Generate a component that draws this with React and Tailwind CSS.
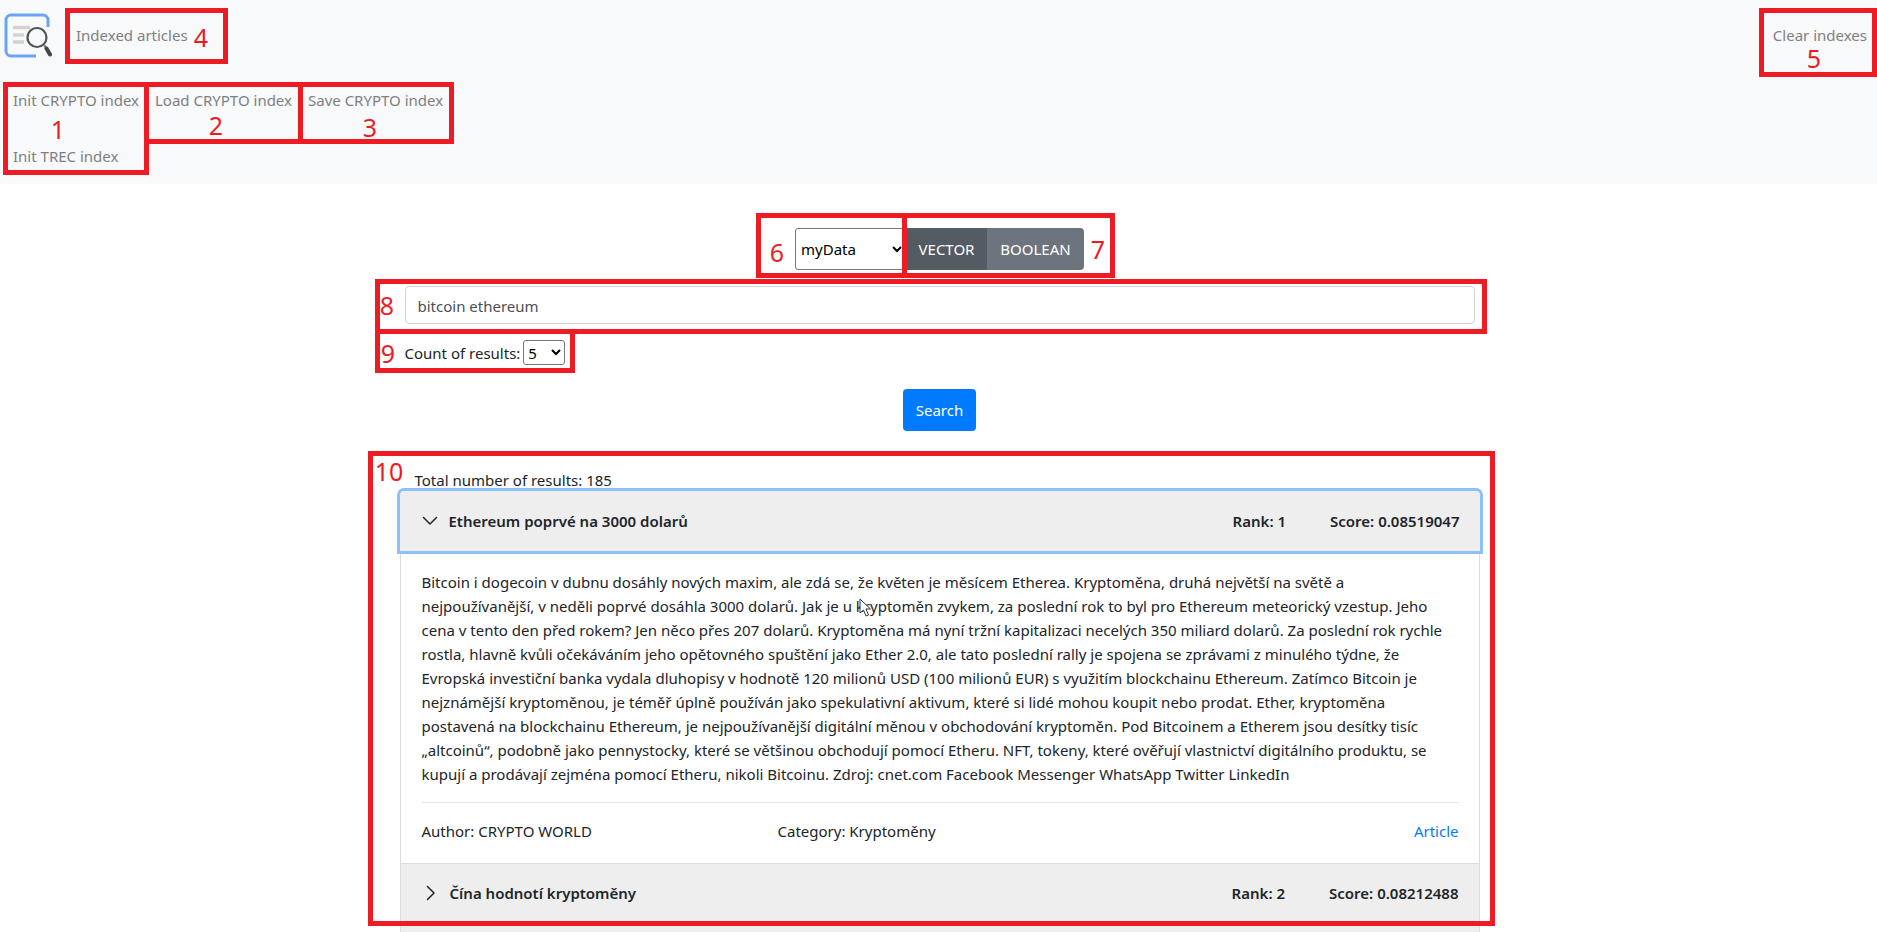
const lines = [
  "Bitcoin i dogecoin v dubnu dosáhly nových maxim, ale zdá se, že květen je měsícem Etherea. Kryptoměna, druhá největší na světě a",
  "nejpoužívanější, v neděli poprvé dosáhla 3000 dolarů. Jak je u kryptoměn zvykem, za poslední rok to byl pro Ethereum meteorický vzestup. Jeho",
  "cena v tento den před rokem? Jen něco přes 207 dolarů. Kryptoměna má nyní tržní kapitalizaci necelých 350 miliard dolarů. Za poslední rok rychle",
  "rostla, hlavně kvůli očekáváním jeho opětovného spuštění jako Ether 2.0, ale tato poslední rally je spojena se zprávami z minulého týdne, že",
  "Evropská investiční banka vydala dluhopisy v hodnotě 120 milionů USD (100 milionů EUR) s využitím blockchainu Ethereum. Zatímco Bitcoin je",
  "nejznámější kryptoměnou, je téměř úplně používán jako spekulativní aktivum, které si lidé mohou koupit nebo prodat. Ether, kryptoměna",
  "postavená na blockchainu Ethereum, je nejpoužívanější digitální měnou v obchodování kryptoměn. Pod Bitcoinem a Etherem jsou desítky tisíc",
  "„altcoinů“, podobně jako pennystocky, které se většinou obchodují pomocí Etheru. NFT, tokeny, které ověřují vlastnictví digitálního produktu, se",
  "kupují a prodávají zejména pomocí Etheru, nikoli Bitcoinu. Zdroj: cnet.com Facebook Messenger WhatsApp Twitter LinkedIn",
];

const boxes = [
  [65, 8, 163, 56], [3, 82, 146, 93], [144, 82, 159, 62], [298, 82, 156, 62], [1759, 8, 118, 69],
  [756, 213, 151, 65], [902, 213, 213, 65], [375, 279, 1112, 55], [375, 329, 200, 44], [368, 451, 1127, 475],
];
const digits = [
  ["1", 58, 129], ["2", 216, 125], ["3", 370, 127], ["4", 201, 37], ["5", 1814, 58],
  ["6", 777, 252], ["7", 1098, 249], ["8", 387, 305], ["9", 388, 353], ["10", 389, 471],
];

function Logo() {
  return (
    <svg width="48" height="47" viewBox="0 0 48 47" fill="none">
      <path d="M44 15V8a5 5 0 0 0-5-5H7a5 5 0 0 0-5 5v31a5 5 0 0 0 5 5h25" stroke="#6aa5f5" strokeWidth="3" />
      <path d="M9 15.500h17M9 23h11M9 30h11" stroke="#d2d2d2" strokeWidth="3.500" />
      <circle cx="33" cy="25.500" r="9.500" fill="#f8f9fa" stroke="#555" strokeWidth="2.200" />
      <path d="M40 33l2 2.500" stroke="#888" strokeWidth="2.500" />
      <path d="M42.500 36.500l3.500 6" stroke="#444" strokeWidth="4" strokeLinecap="round" />
    </svg>
  );
}

function Chevron({ open }) {
  return (
    <svg width="16" height="16" viewBox="0 0 16 16" fill="none" stroke="#212529" strokeWidth="1.500" strokeLinecap="round" strokeLinejoin="round">
      {open ? <path d="M1.500 4.500L8 11l6.500-6.500" /> : <path d="M4.500 1.500L11 8l-6.500 6.500" />}
    </svg>
  );
}

function Header({ open, title, rank, score, className }) {
  return (
    <div className={"flex items-center bg-[#eeeeee] pl-[22px] pr-[20px] text-[15px] font-semibold text-[#212529] " + className}>
      <Chevron open={open} />
      <span className="ml-[11px]">{title}</span>
      <span className="ml-auto">Rank: {rank}</span>
      <span className="ml-[44px]">Score: {score}</span>
    </div>
  );
}

export default function App() {
  return (
    <div className="relative h-[932px] overflow-hidden bg-white text-[15px] leading-6 text-[#212529] [font-family:'Noto_Sans',sans-serif]">
      <nav className="h-[184px] bg-[#f8f9fa] pt-[11px] text-[#7f8082]">
        <div className="flex h-[48px] items-center pl-[4px] pr-[10px]">
          <Logo />
          <span className="ml-[24px]">Indexed articles</span>
          <span className="ml-auto">Clear indexes</span>
        </div>
        <div className="mt-[29px] flex pl-[13px]">
          <div className="flex w-[142px] flex-col gap-[32px]">
            <span>Init CRYPTO index</span>
            <span>Init TREC index</span>
          </div>
          <span className="w-[153px]">Load CRYPTO index</span>
          <span>Save CRYPTO index</span>
        </div>
      </nav>

      <main className="ml-[369.500px] flex w-[1140px] flex-col">
        <div className="mt-[44px] flex justify-center">
          <select defaultValue="myData" className="h-[42px] w-[111px] rounded-l-[3px] border border-[#767676] bg-white pl-[1px] pr-[3px] text-[15px] text-black">
            <option>myData</option>
          </select>
          <button className="h-[42px] w-[81px] bg-[#545b62] text-[15px] text-white">VECTOR</button>
          <button className="h-[42px] w-[97px] rounded-r-[4px] bg-[#6c757d] text-[15px] text-white">BOOLEAN</button>
        </div>

        <input
          defaultValue="bitcoin ethereum"
          className="mx-auto mt-[16px] h-[38px] w-[1070px] rounded-[4px] border border-[#ced4da] px-[12px] pt-[2px] text-[15px] text-[#495057]"
        />

        <div className="ml-[35px] mt-[16px] flex h-[25px] items-center gap-[3px]">
          <span>Count of results:</span>
          <select defaultValue="5" className="h-[25px] w-[42px] rounded-[3px] border border-[#767676] bg-white text-[15px] text-black">
            <option>5</option>
          </select>
        </div>

        <button className="mx-auto mt-[24px] h-[42px] w-[73px] rounded-[4px] bg-[#007bff] text-[15px] text-white">Search</button>

        <div className="ml-[45px] mt-[37px]">Total number of results: 185</div>

        <div className="ml-[30px] w-[1080px]">
          <Header
            open
            title="Ethereum poprvé na 3000 dolarů"
            rank="1"
            score="0.08519047"
            className="relative mt-[-1px] h-[60px] rounded-t-[4px] shadow-[0_0_0_3px_#8dc1fd]"
          />
          <div className="border-x border-[#dddddd] pb-[20px] pl-[21px] pr-[20px] pt-[19px]">
            <div className="whitespace-nowrap text-[#212529]">
              {lines.map((l) => (
                <div key={l}>{l}</div>
              ))}
            </div>
            <div className="mt-[16px] border-t border-[#e5e5e5] pt-[16px]">
              <div className="flex">
                <span className="w-[356px]">Author: CRYPTO WORLD</span>
                <span>Category: Kryptoměny</span>
                <span className="ml-auto text-[#007bff]">Article</span>
              </div>
            </div>
          </div>
          <Header
            title="Čína hodnotí kryptoměny"
            rank="2"
            score="0.08212488"
            className="h-[59px] border border-[#dddddd]"
          />
          <div className="h-[40px] border border-t-0 border-[#dddddd] bg-[#eeeeee]" />
        </div>
      </main>

      {boxes.map(([x, y, w, h]) => (
        <div
          key={x + "-" + y}
          className="pointer-events-none absolute border-[5px] border-[#ed1c24]"
          style={{ left: x, top: y, width: w, height: h }}
        />
      ))}
      {digits.map(([d, x, y]) => (
        <span
          key={d}
          className="pointer-events-none absolute -translate-x-1/2 -translate-y-1/2 text-[25px] leading-none text-[#ed1c24]"
          style={{ left: x, top: y }}
        >
          {d}
        </span>
      ))}
      <svg className="pointer-events-none absolute left-[859px] top-[598px]" width="13" height="19" viewBox="0 0 13 19">
        <path d="M1 1v14l3.500-3 2.500 6 2.500-1-2.500-6h4.500z" fill="#fff" stroke="#333" strokeWidth="1" />
      </svg>
    </div>
  );
}
